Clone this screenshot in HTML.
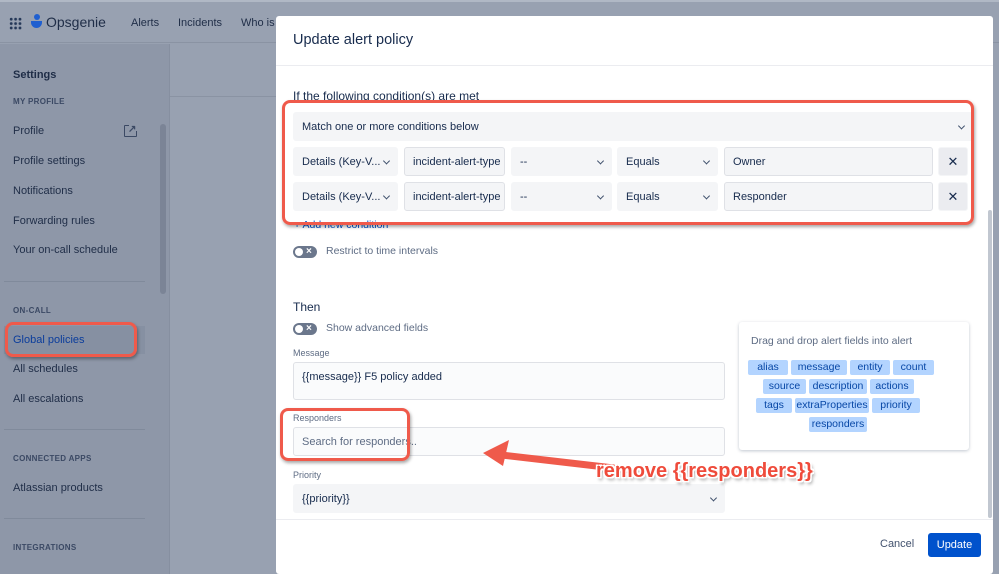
<!DOCTYPE html>
<html><head><meta charset="utf-8"><style>
*{box-sizing:border-box;margin:0;padding:0}
html{width:999px;height:574px;overflow:hidden}
body{width:999px;height:574px;overflow:hidden;position:relative;font-family:"Liberation Sans",sans-serif;background:#98a1b1;color:#253858}
.a{position:absolute}
.nav{left:0;top:0;width:999px;height:43px;background:#98a1b1;border-bottom:1px solid #8a93a3;border-top:2px solid #b0b8c5}
.side{left:0;top:44px;width:170px;height:530px;background:#8e97a8;border-right:1px solid #868fa0}
.s{position:absolute;left:13px;font-size:11px;color:#1f2d47}
.h{position:absolute;left:13px;font-size:8px;font-weight:bold;color:#3b4964;letter-spacing:.3px}
.hr{position:absolute;left:4px;width:141px;height:1px;background:#808a9b}
.modal{left:276px;top:16px;width:717px;height:558px;background:#fff;border-radius:3px;overflow:hidden}
.f{position:absolute;background:#f4f5f7;border:1px solid #dfe1e6;border-radius:3px;font-size:11px;color:#172b4d;padding-left:8px;display:flex;align-items:center}
.dd{background:#f4f5f7;border-color:#f4f5f7}
.chev{position:absolute;right:8px;top:50%;width:5px;height:5px;border-right:1.3px solid #42526e;border-bottom:1.3px solid #42526e;transform:translateY(-70%) rotate(45deg)}
.red{position:absolute;border:3px solid #ef5a4b;border-radius:8px;box-shadow:1px 2px 3px rgba(0,0,0,.35)}
.tag{position:absolute;background:#b3d4ff;color:#0747a6;font-size:10.5px;height:15px;line-height:15px;text-align:center;border-radius:2px}
.tog{position:absolute;width:24px;height:12px;border-radius:6px;background:#6b778c}
.tog:before{content:"";position:absolute;left:2px;top:2px;width:8px;height:8px;border-radius:50%;background:#fff}
.tog:after{content:"×";position:absolute;left:13px;top:0px;font-size:10px;line-height:12px;color:#fff;font-weight:bold}
.lbl{position:absolute;font-size:9px;color:#5e6c84}
</style></head><body>
<div class="a nav">
 <div class="a" style="left:9px;top:15px;width:13px;height:13px;background:radial-gradient(circle,#253858 1.3px,transparent 1.6px) 0 0/4.4px 4.4px"></div>
 <div class="a" style="left:31px;top:12px;width:11px;height:15px">
  <div class="a" style="left:3px;top:0;width:6px;height:6px;border-radius:50%;background:#1f5fd0"></div>
  <div class="a" style="left:0;top:7px;width:11px;height:7px;background:#1f5fd0;border-radius:0 0 6px 6px"></div></div>
 <div class="a" style="left:46px;top:12px;font-size:14px;color:#1f2d47">Opsgenie</div>
 <div class="a" style="left:131px;top:15px;font-size:11px;color:#1f2d47">Alerts</div>
 <div class="a" style="left:178px;top:15px;font-size:11px;color:#1f2d47">Incidents</div>
 <div class="a" style="left:241px;top:15px;font-size:11px;color:#1f2d47">Who is</div>
</div>
<div class="a side">
 <div class="s" style="top:25px;font-weight:bold">Settings</div>
 <div class="h" style="top:53px">MY PROFILE</div>
 <div class="s" style="top:81px">Profile</div>
 <div class="a" style="left:124px;top:81px;width:13px;height:12px;border:1.5px solid #3b4964;border-radius:1px"></div>
 <div class="a" style="left:129px;top:79px;width:10px;height:8px;background:#8e97a8"></div>
 <div class="a" style="left:128px;top:80px;font-size:10px;color:#3b4964;font-weight:bold">↗</div>
 <div class="s" style="top:111px">Profile settings</div>
 <div class="s" style="top:141px">Notifications</div>
 <div class="s" style="top:171px">Forwarding rules</div>
 <div class="s" style="top:200px">Your on-call schedule</div>
 <div class="hr" style="top:237px"></div>
 <div class="h" style="top:262px">ON-CALL</div>
 <div class="a" style="left:4px;top:282px;width:141px;height:28px;background:#8690a2"></div>
 <div class="s" style="top:290px;color:#0b3d9c">Global policies</div>
 <div class="s" style="top:319px">All schedules</div>
 <div class="s" style="top:349px">All escalations</div>
 <div class="hr" style="top:385px"></div>
 <div class="h" style="top:410px">CONNECTED APPS</div>
 <div class="s" style="top:438px">Atlassian products</div>
 <div class="hr" style="top:474px"></div>
 <div class="h" style="top:499px">INTEGRATIONS</div>
 <div class="a" style="left:160px;top:80px;width:6px;height:170px;border-radius:3px;background:#7b8496"></div>
</div>
<div class="a" style="left:170px;top:96px;width:106px;height:1px;background:#8a93a3"></div>
<div class="red" style="left:5px;top:322px;width:132px;height:35px"></div>

<div class="a modal">
 <div class="a" style="left:17px;top:16px;font-size:14.5px;color:#172b4d">Update alert policy</div>
 <div class="a" style="left:0;top:49px;width:717px;height:1px;background:#ebecf0"></div>
 <div class="a" style="left:17px;top:73px;font-size:12px;color:#172b4d">If the following condition(s) are met</div>
 <div class="f dd" style="left:17px;top:96px;width:680px;height:29px">Match one or more conditions below<span class="chev"></span></div>
 <div class="f dd" style="left:17px;top:131px;width:105px;height:29px">Details (Key-V...<span class="chev"></span></div>
 <div class="f" style="left:128px;top:131px;width:101px;height:29px">incident-alert-type</div>
 <div class="f dd" style="left:235px;top:131px;width:101px;height:29px">--<span class="chev"></span></div>
 <div class="f dd" style="left:341px;top:131px;width:101px;height:29px">Equals<span class="chev"></span></div>
 <div class="f" style="left:448px;top:131px;width:209px;height:29px">Owner</div>
 <div class="f dd" style="left:662px;top:131px;width:30px;height:29px;padding:0;justify-content:center;font-size:13px;background:#ebecf0">✕</div>
 <div class="f dd" style="left:17px;top:166px;width:105px;height:29px">Details (Key-V...<span class="chev"></span></div>
 <div class="f" style="left:128px;top:166px;width:101px;height:29px">incident-alert-type</div>
 <div class="f dd" style="left:235px;top:166px;width:101px;height:29px">--<span class="chev"></span></div>
 <div class="f dd" style="left:341px;top:166px;width:101px;height:29px">Equals<span class="chev"></span></div>
 <div class="f" style="left:448px;top:166px;width:209px;height:29px">Responder</div>
 <div class="f dd" style="left:662px;top:166px;width:30px;height:29px;padding:0;justify-content:center;font-size:13px;background:#ebecf0">✕</div>
 <div class="a" style="left:18px;top:203px;font-size:10.5px;color:#0052cc">+ Add new condition</div>
 <div class="red" style="left:6px;top:84px;width:692px;height:125px"></div>
 <div class="tog" style="left:17px;top:230px"></div>
 <div class="a" style="left:50px;top:229px;font-size:10.5px;color:#5e6c84">Restrict to time intervals</div>
 <div class="a" style="left:17px;top:284px;font-size:12px;color:#172b4d">Then</div>
 <div class="tog" style="left:17px;top:307px"></div>
 <div class="a" style="left:50px;top:306px;font-size:10.5px;color:#5e6c84">Show advanced fields</div>
 <div class="lbl" style="left:17px;top:332px">Message</div>
 <div class="f" style="left:17px;top:346px;width:432px;height:38px;align-items:flex-start;padding-top:8px;background:#fafbfc">{{message}} F5 policy added</div>
 <div class="lbl" style="left:17px;top:397px">Responders</div>
 <div class="f" style="left:17px;top:411px;width:432px;height:29px;background:#fafbfc;color:#5e6c84">Search for responders..</div>
 <div class="red" style="left:4px;top:392px;width:130px;height:53px"></div>
 <div class="lbl" style="left:17px;top:454px">Priority</div>
 <div class="f dd" style="left:17px;top:468px;width:432px;height:29px">{{priority}}<span class="chev"></span></div>
 <div class="a" style="left:463px;top:306px;width:230px;height:128px;border-radius:3px;box-shadow:0 1px 3px rgba(9,30,66,.25)">
  <div class="a" style="left:12px;top:13px;font-size:10.5px;color:#5e6c84">Drag and drop alert fields into alert</div>
  <div class="tag" style="left:9px;top:38px;width:40px">alias</div>
  <div class="tag" style="left:52px;top:38px;width:56px">message</div>
  <div class="tag" style="left:111px;top:38px;width:40px">entity</div>
  <div class="tag" style="left:154px;top:38px;width:41px">count</div>
  <div class="tag" style="left:24px;top:57px;width:43px">source</div>
  <div class="tag" style="left:70px;top:57px;width:58px">description</div>
  <div class="tag" style="left:131px;top:57px;width:44px">actions</div>
  <div class="tag" style="left:17px;top:76px;width:36px">tags</div>
  <div class="tag" style="left:56px;top:76px;width:74px">extraProperties</div>
  <div class="tag" style="left:133px;top:76px;width:48px">priority</div>
  <div class="tag" style="left:70px;top:95px;width:58px">responders</div>
 </div>
 <div class="a" style="left:712px;top:194px;width:4px;height:308px;background:#c1c7d0;border-radius:2px"></div>
 <div class="a" style="left:0;top:503px;width:717px;height:1px;background:#ebecf0"></div>
 <div class="a" style="left:604px;top:522px;font-size:11px;color:#42526e">Cancel</div>
 <div class="a" style="left:652px;top:517px;width:53px;height:24px;background:#0052cc;border-radius:3px;color:#fff;font-size:11px;text-align:center;line-height:24px">Update</div>
 <svg class="a" style="left:205px;top:420px" width="160" height="50"><path d="M12 18 L150 34" stroke="#ef5a4b" stroke-width="7"/><path d="M2 17 L28 4 L22 30 Z" fill="#ef5a4b"/></svg>
 <div class="a" style="left:320px;top:444px;font-size:20px;font-weight:bold;color:#ef4b3b;text-shadow:-1.5px -1.5px 0 #fff,1.5px -1.5px 0 #fff,-1.5px 1.5px 0 #fff,1.5px 1.5px 0 #fff,2px 3px 3px rgba(0,0,0,.4)">remove {{responders}}</div>
</div>
</body></html>
